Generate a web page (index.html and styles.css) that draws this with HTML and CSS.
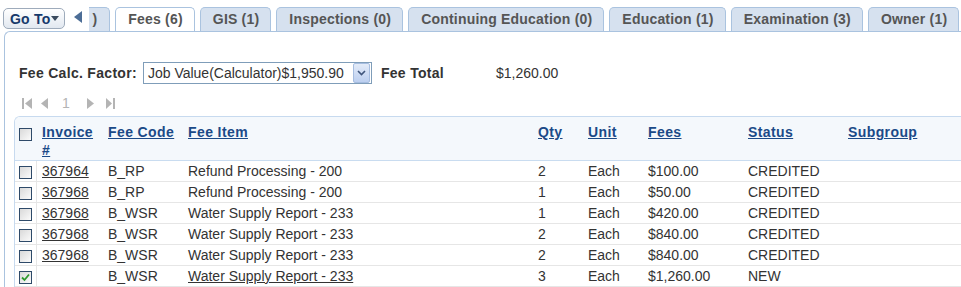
FILE: index.html
```html
<!DOCTYPE html>
<html lang="en">
<head>
  <meta charset="UTF-8" />
  <title>Fees</title>
  <link rel="stylesheet" href="styles.css">
</head>
<body>
  <div class="tabbar">
    <button class="goto">Go To<span class="caret"></span></button>
    <span class="scroll-left"></span>
    <div class="tabs">
      <span class="tab partial">)</span>
      <span class="tab active">Fees (6)</span>
      <span class="tab">GIS (1)</span>
      <span class="tab">Inspections (0)</span>
      <span class="tab">Continuing Education (0)</span>
      <span class="tab">Education (1)</span>
      <span class="tab">Examination (3)</span>
      <span class="tab">Owner (1)</span>
    </div>
  </div>

  <div class="panel">
    <div class="factor">
      <span class="label">Fee Calc. Factor:</span>
      <div class="select">
        <span>Job Value(Calculator)$1,950.90</span>
        <span class="select-btn">
          <svg width="9" height="6" viewBox="0 0 9 6"><path d="M1 1 L4.5 4.5 L8 1" fill="none" stroke="#3f557c" stroke-width="1.6"/></svg>
        </span>
      </div>
      <span class="label total-label">Fee Total</span>
      <span>$1,260.00</span>
    </div>

    <div class="pager">
      <svg class="pg-first" width="10" height="11" viewBox="0 0 10 11"><rect x="0" y="0" width="2" height="11" fill="#b4b4b4"/><path d="M10 0 L3 5.5 L10 11 Z" fill="#b4b4b4"/></svg>
      <svg class="pg-prev" width="7" height="11" viewBox="0 0 7 11"><path d="M7 0 L0 5.5 L7 11 Z" fill="#b4b4b4"/></svg>
      <span class="pg-num">1</span>
      <svg class="pg-next" width="7" height="11" viewBox="0 0 7 11"><path d="M0 0 L7 5.5 L0 11 Z" fill="#b4b4b4"/></svg>
      <svg class="pg-last" width="9" height="11" viewBox="0 0 9 11"><path d="M0 0 L6 5.5 L0 11 Z" fill="#b4b4b4"/><rect x="7" y="0" width="2" height="11" fill="#b4b4b4"/></svg>
    </div>

    <table class="grid">
      <colgroup>
        <col class="c-cb"><col class="c-inv"><col class="c-code"><col class="c-item">
        <col class="c-qty"><col class="c-unit"><col class="c-fees"><col class="c-status"><col class="c-sub">
      </colgroup>
      <thead>
        <tr>
          <th class="cb"><span class="check"></span></th>
          <th><a href="#">Invoice #</a></th>
          <th><a href="#">Fee Code</a></th>
          <th><a href="#">Fee Item</a></th>
          <th><a href="#">Qty</a></th>
          <th><a href="#">Unit</a></th>
          <th><a href="#">Fees</a></th>
          <th><a href="#">Status</a></th>
          <th><a href="#">Subgroup</a></th>
        </tr>
      </thead>
      <tbody>
        <tr>
          <td class="cb"><span class="check"></span></td>
          <td><a href="#">367964</a></td><td>B_RP</td><td>Refund Processing - 200</td>
          <td>2</td><td>Each</td><td>$100.00</td><td>CREDITED</td><td></td>
        </tr>
        <tr>
          <td class="cb"><span class="check"></span></td>
          <td><a href="#">367968</a></td><td>B_RP</td><td>Refund Processing - 200</td>
          <td>1</td><td>Each</td><td>$50.00</td><td>CREDITED</td><td></td>
        </tr>
        <tr>
          <td class="cb"><span class="check"></span></td>
          <td><a href="#">367968</a></td><td>B_WSR</td><td>Water Supply Report - 233</td>
          <td>1</td><td>Each</td><td>$420.00</td><td>CREDITED</td><td></td>
        </tr>
        <tr>
          <td class="cb"><span class="check"></span></td>
          <td><a href="#">367968</a></td><td>B_WSR</td><td>Water Supply Report - 233</td>
          <td>2</td><td>Each</td><td>$840.00</td><td>CREDITED</td><td></td>
        </tr>
        <tr>
          <td class="cb"><span class="check"></span></td>
          <td><a href="#">367968</a></td><td>B_WSR</td><td>Water Supply Report - 233</td>
          <td>2</td><td>Each</td><td>$840.00</td><td>CREDITED</td><td></td>
        </tr>
        <tr>
          <td class="cb"><span class="check checked"><svg width="11" height="11" viewBox="0 0 11 11"><path d="M2 5.5 L4.5 8 L9 2.5" fill="none" stroke="#2f9a2f" stroke-width="1.8"/></svg></span></td>
          <td></td><td>B_WSR</td><td><a href="#">Water Supply Report - 233</a></td>
          <td>3</td><td>Each</td><td>$1,260.00</td><td>NEW</td><td></td>
        </tr>
      </tbody>
    </table>
  </div>
</body>
</html>
```

FILE: styles.css
```css
:root {
  --tab-border: #aac3df;
  --tab-bg: #d6e1ef;
  --grid-border: #c7daef;
  --head-bg: #f4f8fc;
  --link: #1b4a88;
  --text: #333;
}
* { box-sizing: border-box; }
body {
  margin: 0;
  font-family: "Liberation Sans", Arial, sans-serif;
  font-size: 14px;
  color: var(--text);
  background: #fff;
  overflow: hidden;
}

/* tab strip */
.tabbar {
  display: flex;
  align-items: flex-end;
  height: 31px;
  padding-left: 3px;
  overflow: hidden;
}
.goto {
  display: flex;
  flex-shrink: 0;
  align-items: center;
  height: 21px;
  margin-bottom: 2px;
  padding: 0 5px 0 6px;
  border: 1px solid #9eabbb;
  border-radius: 5px;
  background: linear-gradient(#ffffff, #e2e8f0);
  font: bold 14px "Liberation Sans", Arial, sans-serif;
  letter-spacing: .2px;
  white-space: nowrap;
  color: #16396b;
}
.goto .caret {
  width: 0; height: 0;
  margin-left: 1px;
  border-left: 4px solid transparent;
  border-right: 4px solid transparent;
  border-top: 5px solid #3a4a5e;
}
.scroll-left {
  flex-shrink: 0;
  width: 0; height: 0;
  margin: 0 0 8px 9px;
  border-top: 6px solid transparent;
  border-bottom: 6px solid transparent;
  border-right: 8px solid #4c6d96;
}
.tabs { display: flex; gap: 5px; margin-left: 7px; }
.tab {
  flex-shrink: 0;
  height: 24px;
  padding: 0 11px 0 12px;
  border: 1px solid var(--tab-border);
  border-bottom: none;
  border-radius: 5px 5px 0 0;
  background: var(--tab-bg);
  color: #555;
  font-weight: bold;
  letter-spacing: .2px;
  line-height: 23px;
  white-space: nowrap;
}
.tab.active { background: #fff; }
.tab.partial {
  padding: 0 12px 0 3px;
  border-left: none;
  border-radius: 0 5px 0 0;
}

/* content panel */
.panel {
  height: 256px;
  margin-left: 4px;
  padding: 30px 0 0 9px;
  border-left: 1px solid var(--tab-border);
  border-top: 1px solid var(--tab-border);
  border-top-left-radius: 6px;
}
.factor {
  display: flex;
  align-items: center;
  height: 22px;
  margin-left: 5px;
}
.label { font-weight: bold; letter-spacing: .3px; }
.factor > .label:first-child { margin-right: 6px; }
.select {
  display: flex;
  align-items: center;
  width: 229px;
  height: 22px;
  padding: 0 1px 0 4px;
  border: 1px solid #7f9db9;
  background: #fff;
  white-space: nowrap;
}
.select-btn {
  display: flex;
  align-items: center;
  justify-content: center;
  width: 17px;
  height: 20px;
  margin-left: auto;
  border: 1px solid #a6bde0;
  border-radius: 2px;
  background: linear-gradient(#e3ebf8, #bccff0);
}
.total-label { width: 115px; margin-left: 9px; }

.pager {
  display: flex;
  align-items: center;
  height: 12px;
  margin: 13px 0 0 8px;
}
.pg-prev { margin-left: 9px; }
.pg-num { margin-left: 14px; color: #b4b4b4; line-height: 12px; }
.pg-next { margin-left: 17px; }
.pg-last { margin-left: 12px; }

/* fee grid */
.grid {
  width: 100%;
  margin-top: 7px;
  table-layout: fixed;
  border-collapse: separate;
  border-spacing: 0;
  border-left: 1px solid var(--grid-border);
  border-top: 1px solid var(--grid-border);
  border-top-left-radius: 6px;
}
.c-cb { width: 22px; }
.c-inv { width: 66px; }
.c-code { width: 80px; }
.c-item { width: 350px; }
.c-qty { width: 50px; }
.c-unit { width: 60px; }
.c-fees { width: 100px; }
.c-status { width: 100px; }
.grid th {
  padding: 6px 5px 1px;
  background: var(--head-bg);
  border-bottom: 1px solid #c9dcf0;
  text-align: left;
  vertical-align: top;
  line-height: 18px;
  font-weight: bold;
  letter-spacing: .4px;
}
.grid th:first-child { border-top-left-radius: 5px; }
.grid th a { color: var(--link); }
.grid td {
  padding: 0 5px;
  line-height: 20px;
  border-bottom: 1px solid #e6e6e6;
  white-space: nowrap;
  overflow: hidden;
}
.grid td a { color: var(--text); }
.grid td.cb { padding: 0 0 0 4px; border-right: 1px solid #e6e6e6; }
.grid th.cb { padding: 11px 0 0 4px; }
.check {
  display: inline-block;
  width: 13px;
  height: 13px;
  vertical-align: middle;
  border: 1px solid #2e4a69;
  background: linear-gradient(135deg, #d9d9d9, #fbfbfb);
}
.grid th .check { display: block; }
.check svg { display: block; }
```
